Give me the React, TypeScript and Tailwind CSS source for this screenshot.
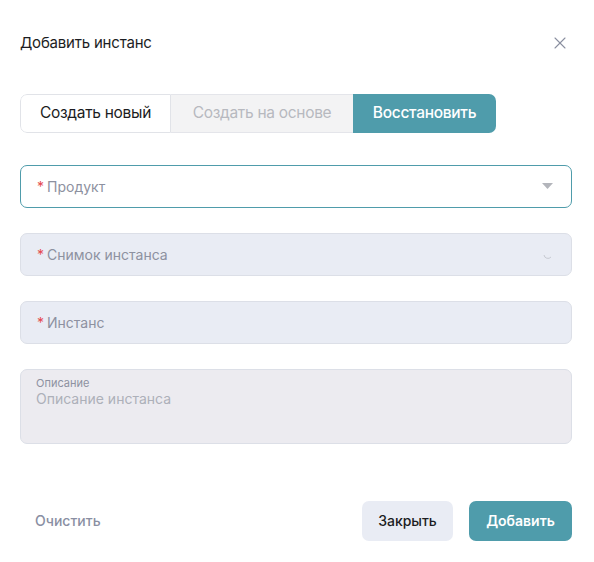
import { X } from "lucide-react";

const tabs = [
  { label: "Создать новый", state: "idle" },
  { label: "Создать на основе", state: "disabled" },
  { label: "Восстановить", state: "active" },
];

function Required({ label }: { label: string }) {
  return (
    <span className="text-[14px] text-[#8d91a0]">
      <span className="mr-[3px] text-[#e5484d]">*</span>
      {label}
    </span>
  );
}

export default function App() {
  return (
    <div className="h-[562px] w-[594px] bg-white font-['Inter',sans-serif] text-[#1c1d22]">
      <div className="flex items-center justify-between pl-[20px] pr-[24px] pt-[32px]">
        <h2 className="text-[15px] font-normal tracking-[-0.2px]">Добавить инстанс</h2>
        <button className="text-[#8a8fa0]">
          <X size={20} strokeWidth={1.3} />
        </button>
      </div>

      <div className="px-[20px] pt-[39px]">
        <div className="flex h-[39px] w-fit overflow-hidden rounded-[7px]">
          {tabs.map((t) => (
            <div
              key={t.label}
              className={
                t.state === "active"
                  ? "flex w-[143px] items-center justify-center bg-[#4f9cab] text-[15.5px] font-medium tracking-[-0.3px] text-white"
                  : t.state === "disabled"
                    ? "flex w-[182px] items-center justify-center border-y border-[#e4e5ea] bg-[#f3f3f4] text-[15.5px] tracking-[-0.3px] text-[#b7b9bf]"
                    : "flex w-[151px] items-center justify-center rounded-l-[7px] border border-[#e1e3e8] bg-white text-[15.5px] tracking-[-0.3px] text-[#1c1d22]"
              }
            >
              {t.label}
            </div>
          ))}
        </div>
      </div>

      <div className="flex flex-col gap-[25px] pl-[20px] pr-[22px] pt-[32px]">
        <div className="flex h-[43px] items-center justify-between rounded-[7px] border border-[#4f9cab] bg-white pl-[16px] pr-[18px]">
          <Required label="Продукт" />
          <svg width="11" height="6" viewBox="0 0 11 6">
            <path d="M0 0h11L5.5 6z" fill="#b3b5bb" />
          </svg>
        </div>

        <div className="flex h-[43px] items-center justify-between rounded-[7px] border border-[#dcdfe7] bg-[#e9ecf4] pl-[16px] pr-[18px]">
          <Required label="Снимок инстанса" />
          <svg width="10" height="10" viewBox="0 0 10 10" className="mt-[6px]">
            <path d="M1 3a4 4 0 0 0 7 2" fill="none" stroke="#c7cad2" strokeWidth="1" />
          </svg>
        </div>

        <div className="flex h-[43px] items-center rounded-[7px] border border-[#dcdfe7] bg-[#e9ecf4] pl-[16px]">
          <Required label="Инстанс" />
        </div>

        <div className="flex h-[75px] flex-col rounded-[7px] border border-[#dcdfe7] bg-[#ecebf0] pl-[15px] pt-[6px]">
          <span className="text-[11px] leading-[14px] text-[#8d91a0]">Описание</span>
          <span className="text-[14px] leading-[18px] text-[#adb0b9]">Описание инстанса</span>
        </div>
      </div>

      <div className="flex items-center justify-between pl-[35px] pr-[22px] pt-[57px]">
        <button className="text-[14px] font-medium text-[#8a8fa3]">Очистить</button>
        <div className="flex gap-[16px]">
          <button className="h-[40px] w-[91px] rounded-[7px] bg-[#e9ecf4] text-[14px] font-medium text-[#1c1d22]">
            Закрыть
          </button>
          <button className="h-[40px] w-[103px] rounded-[7px] bg-[#4f9cab] text-[14px] font-semibold text-white">
            Добавить
          </button>
        </div>
      </div>
    </div>
  );
}
